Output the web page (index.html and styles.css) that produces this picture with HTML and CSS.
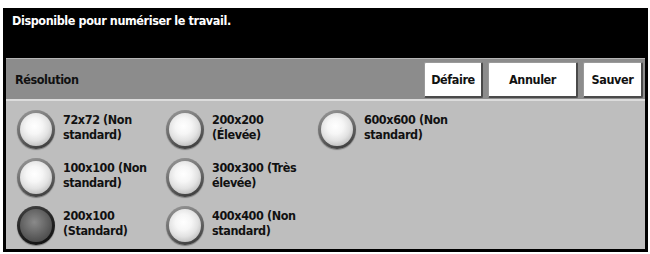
FILE: index.html
```
<!DOCTYPE html>
<html>
<head>
<meta charset="utf-8">
<link rel="stylesheet" href="styles.css">
</head>
<body>
<div class="screen">
  <div class="status">Disponible pour numériser le travail.</div>
  <div class="header">
    <div class="title">Résolution</div>
    <div class="buttons">
      <div class="btn btn-undo">Défaire</div>
      <div class="btn btn-cancel">Annuler</div>
      <div class="btn btn-save">Sauver</div>
    </div>
  </div>
  <div class="content">
    <div class="opt"><span class="radio"></span><span class="label">72x72 (Non<br>standard)</span></div>
    <div class="opt"><span class="radio"></span><span class="label">200x200<br>(Élevée)</span></div>
    <div class="opt"><span class="radio"></span><span class="label">600x600 (Non<br>standard)</span></div>
    <div class="opt"><span class="radio"></span><span class="label">100x100 (Non<br>standard)</span></div>
    <div class="opt"><span class="radio"></span><span class="label">300x300 (Très<br>élevée)</span></div>
    <div class="opt empty"></div>
    <div class="opt"><span class="radio selected"></span><span class="label">200x100<br>(Standard)</span></div>
    <div class="opt"><span class="radio"></span><span class="label">400x400 (Non<br>standard)</span></div>
  </div>
</div>
</body>
</html>
```
FILE: styles.css
```
* { box-sizing: border-box; }
body {
  margin: 0;
  background: #ffffff;
  font-family: "DejaVu Sans Condensed", "Liberation Sans", sans-serif;
  font-weight: bold;
  font-size: 12.5px;
  letter-spacing: -0.4px;
}
.screen {
  margin: 8px 2px 0 3px;
  width: 645px;
  height: 244px;
  background: #000;
  padding: 0 3px 3px 3px;
  display: flex;
  flex-direction: column;
}
.status {
  flex: none;
  height: 50px;
  color: #fff;
  padding: 5px 0 0 6px;
  line-height: 15px;
}
.header {
  flex: none;
  height: 41px;
  background: #8c8c8c;
  border-top: 1px solid #b4b4b4;
  display: flex;
  align-items: center;
}
.title {
  margin-left: 9px;
  color: #111;
}
.buttons {
  margin-left: auto;
  margin-right: 2px;
  display: flex;
  gap: 5px;
  align-self: flex-end;
  margin-bottom: 1px;
}
.btn {
  height: 36px;
  background: #fff;
  border-top: 1px solid #9a9a9a;
  border-left: 1px solid #9a9a9a;
  border-right: 2px solid #4a4a4a;
  border-bottom: 2px solid #4a4a4a;
  border-radius: 2px;
  display: flex;
  align-items: center;
  justify-content: center;
  color: #111;
}
.btn-undo { width: 59px; }
.btn-cancel { width: 90px; }
.btn-save { width: 60px; }
.content {
  flex: 1;
  min-height: 0;
  overflow: hidden;
  background: #bebebe;
  border-top: 2px solid #dcdcdc;
  display: grid;
  grid-template-columns: 149px 152px 1fr;
  grid-template-rows: 48px 48px 40px;
  padding: 9px 0 0 11px;
}
.opt {
  display: flex;
  align-items: flex-start;
  gap: 8px;
}
.radio {
  flex: none;
  width: 38px;
  height: 39px;
  border-radius: 50%;
  border: 3px solid transparent;
  background:
    radial-gradient(circle at 45% 40%, #ffffff 0%, #f6f6f6 30%, #e2e2e2 55%, #c4c4c4 75%, #8a8a8a 100%) padding-box,
    linear-gradient(160deg, #9a9a9a 0%, #6a6a6a 50%, #333 100%) border-box;
  box-shadow: 0 1px 1px rgba(0,0,0,0.35);
}
.radio.selected {
  background:
    radial-gradient(circle at 45% 40%, #8a8a8a 0%, #6e6e6e 35%, #555 65%, #3c3c3c 100%) padding-box,
    linear-gradient(160deg, #444 0%, #222 50%, #111 100%) border-box;
}
.label {
  padding-top: 2px;
  line-height: 15px;
  color: #111;
}
```
